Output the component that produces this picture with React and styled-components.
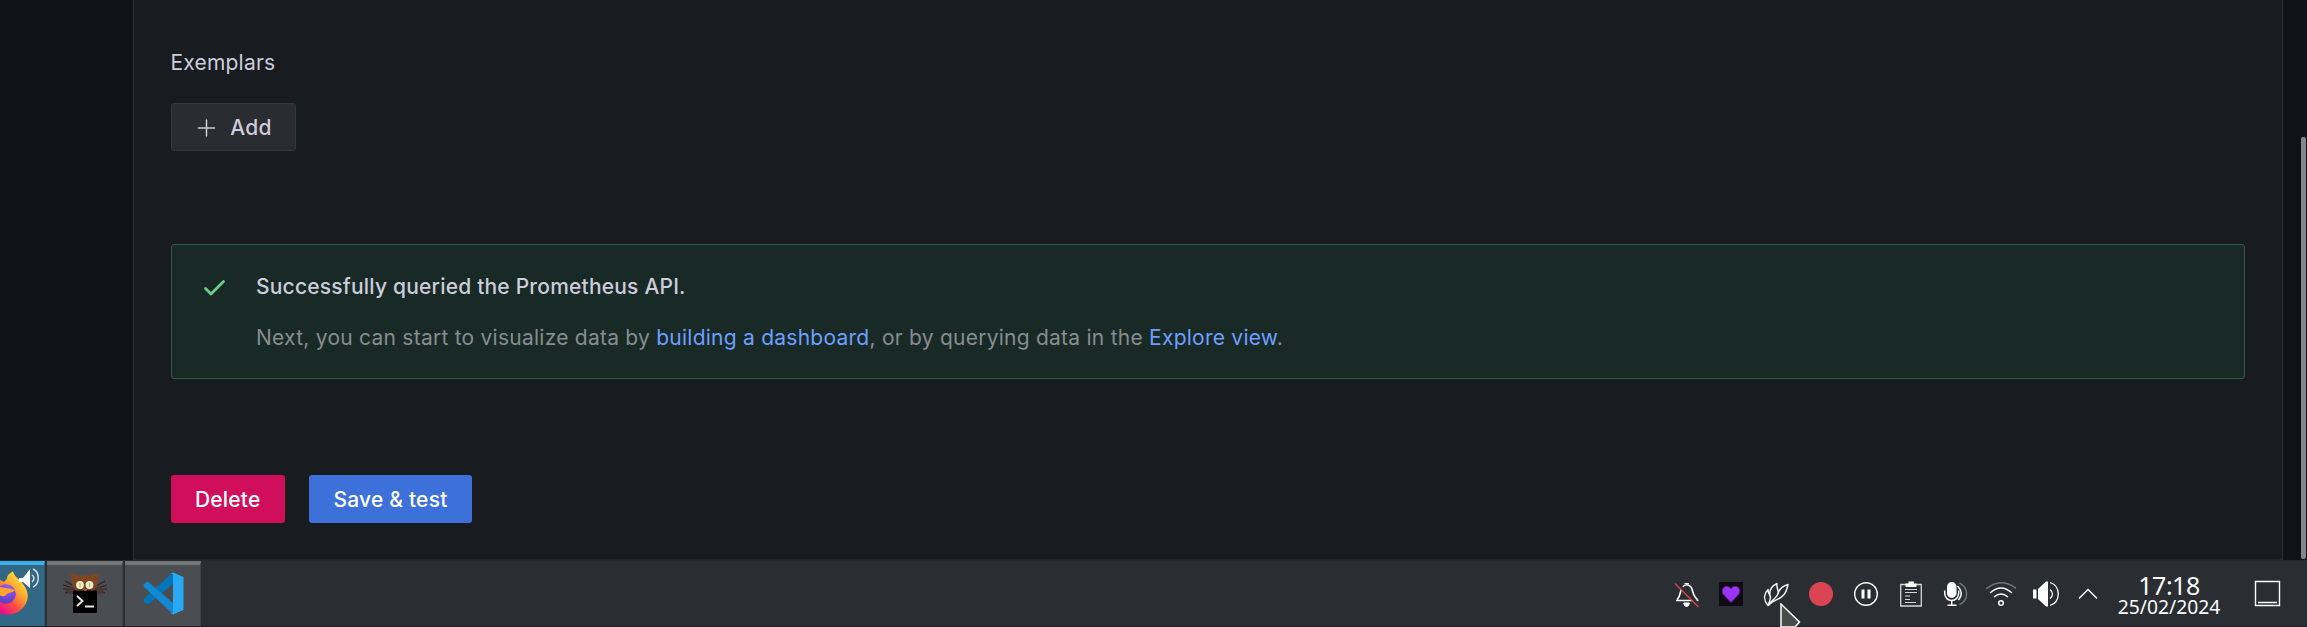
import React from 'react';
import styled, { createGlobalStyle } from 'styled-components';

const Global = createGlobalStyle`
  *, *::before, *::after { box-sizing: border-box; }
  body { margin: 0; background: #111217; overflow: hidden; }
  p, h3 { margin: 0; }
`;

const Screen = styled.div`
  width: 2307px;
  height: 627px;
  display: flex;
  flex-direction: column;
  background: #111217;
  font-family: Inter, 'Liberation Sans', sans-serif;
  font-size: 21px;
  letter-spacing: 0.2px;
  color: #ccccdc;
`;

const Page = styled.div`
  display: flex;
  height: 560px;
  padding-left: 133px;
`;

const Panel = styled.main`
  width: 2150px;
  display: flex;
  flex-direction: column;
  align-items: flex-start;
  padding: 47px 37px 0 36.5px;
  background: #181b1f;
  border-left: 1px solid #303135;
  border-right: 1px solid #303135;
  border-bottom: 1px solid #25282b;
`;

const Gutter = styled.div`
  flex: 1;
  display: flex;
  justify-content: flex-end;
  padding: 137px 1px 1px 0;
`;

const Scrollbar = styled.div`
  width: 5px;
  border-radius: 2px;
  background: #86868a;
`;

const Label = styled.h3`
  font-size: 21px;
  line-height: 32px;
  font-weight: 400;
`;

const variants = {
  secondary: 'background: #2b2c31; color: #ccccdc; border: 1px solid #36373c;',
  danger: 'background: #d10e5c; color: #fff;',
  primary: 'background: #3d71d9; color: #fff;',
};

const Button = styled.button`
  height: 48px;
  width: ${(p) => p.$width}px;
  display: inline-flex;
  align-items: center;
  justify-content: center;
  gap: 12px;
  padding: 2px 0 0;
  border: 0;
  border-radius: 3px;
  font: 500 21px/32px Inter, 'Liberation Sans', sans-serif;
  letter-spacing: 0.2px;
  ${(p) => variants[p.$variant]}
`;

const AddButton = styled(Button)`
  margin-top: 24px;
`;

const Alert = styled.section`
  width: 2074.5px;
  height: 135px;
  margin-top: 93px;
  display: flex;
  gap: 30.5px;
  padding: 26px 30px 21px;
  background: #192a26;
  border: 1px solid #2a5942;
  border-radius: 3px;
`;

const AlertBody = styled.div`
  display: flex;
  flex-direction: column;
  gap: 19px;
`;

const AlertTitle = styled.p`
  font-weight: 500;
  line-height: 32px;
`;

const AlertText = styled.p`
  line-height: 32px;
  letter-spacing: 0.245px;
  color: #868d90;
`;

const Link = styled.a`
  color: #6e9fff;
`;

const Actions = styled.div`
  display: flex;
  gap: 24px;
  margin-top: 96px;
`;

const Taskbar = styled.footer`
  height: 67px;
  display: flex;
  justify-content: space-between;
  background: #2a2e32;
  border-top: 1px solid #25282c;
  border-bottom: 1px solid #202226;
`;

const Tasks = styled.div`
  display: flex;
  gap: 2px;
`;

const Task = styled.div`
  width: ${(p) => p.$width}px;
  display: flex;
  justify-content: center;
  background: ${(p) => (p.$active ? '#336884' : '#4a4d51')};
  border-top: 4px solid ${(p) => (p.$active ? '#3daee9' : '#75787b')};
  border-right: 1px solid ${(p) => (p.$active ? '#2e5e78' : '#404347')};
`;

const Tray = styled.div`
  display: flex;
  align-items: center;
  padding-right: 26px;
`;

const TrayIcons = styled.div`
  display: flex;
  gap: 15px;
  svg { display: block; width: 30px; height: 30px; }
`;

const Clock = styled.div`
  width: 126px;
  display: flex;
  flex-direction: column;
  align-items: center;
  padding-top: 1px;
  color: #fcfcfc;
  font-family: 'Noto Sans', sans-serif;
  letter-spacing: 0;
`;

const Time = styled.div`
  font-size: 25px;
  line-height: 25px;
  letter-spacing: -0.5px;
`;

const DateText = styled.div`
  font-size: 19.3px;
  line-height: 18px;
`;

const DesktopButton = styled.svg`
  display: block;
  margin-left: 22px;
`;

const Pointer = styled.svg`
  position: absolute;
  left: 1780px;
  top: 603px;
`;

const PlusIcon = () => (
  <svg width="24" height="24" viewBox="0 0 24 24" stroke="#ccccdc" strokeWidth="1.5" strokeLinecap="round">
    <path d="M12.500 4V20M4.500 12H20.500" />
  </svg>
);

const CheckIcon = () => (
  <svg width="24" height="30" viewBox="0 0 24 30" fill="none" stroke="#6ccf8e" strokeWidth="2.8" strokeLinecap="round" strokeLinejoin="round">
    <path d="M3.500 17.500L9 23L21.500 10.500" />
  </svg>
);

const FirefoxIcon = () => (
  <svg width="44" height="62" viewBox="0 0 44 62">
    <defs>
      <linearGradient id="ffBody" x1="0.8" y1="0" x2="0.2" y2="1">
        <stop offset="0" stopColor="#fff04a" />
        <stop offset="0.4" stopColor="#ffab2e" />
        <stop offset="0.7" stopColor="#ff5040" />
        <stop offset="1" stopColor="#e8108a" />
      </linearGradient>
      <radialGradient id="ffGlobe" cx="0.6" cy="0.2" r="0.9">
        <stop offset="0" stopColor="#a457f0" />
        <stop offset="0.6" stopColor="#7145dc" />
        <stop offset="1" stopColor="#4a3fb0" />
      </radialGradient>
    </defs>
    <path d="M0 15L4 17L7 14C7 10 10 8 13 6.500C15 13 20 14 23 19C29 26 29 34 25 40C20 48 10 52 0 48.500Z" fill="url(#ffBody)" />
    <circle cx="6" cy="29" r="9.800" fill="url(#ffGlobe)" />
    <path d="M0 22C4 23 9 23 15 25C13 28 8 27 6 30C4 32 2 31 0 30.500Z" fill="#ffa62e" />
    <path d="M19 13H23L30 4V23L23 17H19Z" fill="#fcfcfc" />
    <g fill="none" stroke="#d9e5ec" strokeWidth="1.400">
      <path d="M32 10Q36 13 32 17M33 4C40 7 40 19 33 22" />
    </g>
  </svg>
);

const KittyIcon = () => (
  <svg width="50" height="56" viewBox="0 0 50 56">
    <g fill="none" stroke="#2b2321" strokeWidth="1.200">
      <path d="M14 21L5 16M13 23L3 20M13 24L3 24M13 26L5 28M36 21L45 16M37 23L47 20M37 24L47 24M37 26L45 28" />
    </g>
    <path d="M10.500 9Q17 8.500 20 11Q25 9 29 11Q32 8.500 39 9L38 18Q37 23 34 26H16Q12 22 12 18Z" fill="#7c4621" />
    <ellipse cx="11" cy="25.500" rx="5" ry="3.500" fill="#4b3836" />
    <ellipse cx="39" cy="25.500" rx="5" ry="3.500" fill="#4b3836" />
    <circle cx="20" cy="20" r="3.900" fill="#efeed0" />
    <circle cx="29.500" cy="20" r="3.900" fill="#efeed0" />
    <path d="M20 18V22M29.500 18V22" stroke="#b9ba3a" strokeWidth="1.200" />
    <rect x="13" y="25.500" width="24" height="22.500" rx="1" fill="#000" />
    <path d="M22.500 24H27.500L25 26.500Z" fill="#a05c48" />
    <path d="M17 31L22.500 36L17 41M25 41.500H34" fill="none" stroke="#e8e8e8" strokeWidth="1.900" />
  </svg>
);

const CodeIcon = () => (
  <svg width="42" height="56" viewBox="0 0 42 56">
    <path d="M31 7.500V19L6 39.500L2 37Q.5 35.500 2 34L29 9Z" fill="#0075b7" />
    <path d="M31 38V49L2 22Q.5 20.500 2 19L5 17Q6 16.500 7 17.500Z" fill="#1389d3" />
    <path d="M31 7.500L41.500 12V45L31 49.500Z" fill="#29a8f3" />
    <path d="M28 9L31 7.500L33 8.500V48.500L31 49.500L28 47.500Q32 49 32 45V12Q32 8 28 9Z" fill="#29a8f3" />
  </svg>
);

const BellIcon = () => (
  <svg viewBox="0 0 30 30" fill="none">
    <path d="M5 21.500H27.500M6 20.500C9.500 18 9 11 11.500 8Q15.500 3.500 20 8C22.500 12 21.500 17 26.500 20.500" stroke="#fcfcfc" strokeWidth="1.600" />
    <path d="M13.500 4.500H18M12.800 24H18.300Q18.300 27.500 15.500 27.500T12.800 24Z" fill="#fcfcfc" stroke="#fcfcfc" />
    <path d="M5.500 3.500L29 27" stroke="#2a2e32" strokeWidth="3" />
    <path d="M4 4.500L27.500 28" stroke="#da4453" strokeWidth="1.500" />
  </svg>
);

const HeartIcon = () => (
  <svg viewBox="0 0 30 30">
    <rect x="3" y="3" width="24" height="24" fill="#100a17" />
    <path d="M15 23.500L7 15C4 9 11 4 15 10C19 4 26 9 23 15Z" fill="#9b35f5" stroke="#5c2492" strokeWidth=".7" />
  </svg>
);

const FlameIcon = () => (
  <svg viewBox="0 0 30 30" fill="none" stroke="#f0f0f0" strokeWidth="1.500" strokeLinejoin="round">
    <path d="M7 26.500C1.500 20 3.500 14 7 10.500C7 13.500 8 15 9 16.500C8 11.500 11 7 16 4.500C15 9 18 11 17 14.500C18.500 10 21 7 27 5.500C25.500 11 25.500 14 21.500 17C18.500 20.500 12.500 21 7 26.500Z" />
    <path d="M9 16.500C10.500 19 8.500 22 7 26.500M17 14.500C16.500 18 11 21 7 26.500" />
  </svg>
);

const RecordIcon = () => (
  <svg viewBox="0 0 30 30"><circle cx="15" cy="15" r="12" fill="#da4453" /></svg>
);

const PauseIcon = () => (
  <svg viewBox="0 0 30 30" fill="none" stroke="#fcfcfc">
    <circle cx="15" cy="15" r="11.300" strokeWidth="1.400" />
    <path d="M12 10.500V19.500M18 10.500V19.500" strokeWidth="3" />
  </svg>
);

const ClipboardIcon = () => (
  <svg viewBox="0 0 30 30" fill="none" stroke="#d5d6d7" strokeWidth="1.300">
    <path d="M4.700 5.500H25.300V27H4.700Z" />
    <path d="M9.500 4.500H12.500V2.500H18V4.500H20.500V8H9.500Z" fill="#fcfcfc" stroke="none" />
    <path d="M9 10.500H21M9 13.500H21M9 17H14M9 20.500H14M9 23.500H20" strokeWidth="1.100" />
  </svg>
);

const MicIcon = () => (
  <svg viewBox="0 0 30 30" fill="none" stroke="#fcfcfc" strokeWidth="1.500">
    <rect x="6" y="3" width="9.500" height="16" rx="4.700" fill="#fcfcfc" stroke="none" />
    <path d="M3.700 11.500V14C3.700 24 17.700 24 17.700 14V11.500M10.700 21V26M6.500 26.200H15.500" />
    <path d="M16.500 7Q23.500 14 17.500 21" />
    <path d="M18.500 4C28 9 28 21 18.500 25.500" stroke="#707376" />
  </svg>
);

const WifiIcon = () => (
  <svg viewBox="0 0 30 30" fill="none" stroke="#fcfcfc" strokeWidth="1.500">
    <path d="M0 10Q15-2.500 31 10" stroke="#707376" />
    <path d="M4 14Q15 4 26 14M8 18Q15 12 22 18" />
    <circle cx="15" cy="24" r="2.300" />
  </svg>
);

const SpeakerIcon = () => (
  <svg viewBox="0 0 30 30" fill="none" stroke="#fcfcfc" strokeWidth="1.300">
    <path d="M2 10.500H5.500V19.500H2ZM7 10L15 2.500H17V27.500H15L7 20Z" fill="#fcfcfc" stroke="none" />
    <path d="M19 10.500Q24 15 19 19.500M19 3.500C30 7 30 23 19 26.500" />
  </svg>
);

const ChevronIcon = () => (
  <svg viewBox="0 0 30 30" fill="none" stroke="#fcfcfc" strokeWidth="1.400">
    <path d="M3 19.500L12 10.500L21 19.500" />
  </svg>
);

export default function App() {
  return (
    <Screen>
      <Global />
      <Page>
        <Panel>
          <Label>Exemplars</Label>
          <AddButton $variant="secondary" $width={125}>
            <PlusIcon />
            Add
          </AddButton>
          <Alert>
            <CheckIcon />
            <AlertBody>
              <AlertTitle>Successfully queried the Prometheus API.</AlertTitle>
              <AlertText>
                Next, you can start to visualize data by <Link>building a dashboard</Link>, or by querying data in the{' '}
                <Link>Explore view</Link>.
              </AlertText>
            </AlertBody>
          </Alert>
          <Actions>
            <Button $variant="danger" $width={114.5}>Delete</Button>
            <Button $variant="primary" $width={163}>Save &amp; test</Button>
          </Actions>
        </Panel>
        <Gutter>
          <Scrollbar />
        </Gutter>
      </Page>
      <Taskbar>
        <Tasks>
          <Task $active $width={45}><FirefoxIcon /></Task>
          <Task $width={76}><KittyIcon /></Task>
          <Task $width={76}><CodeIcon /></Task>
        </Tasks>
        <Tray>
          <TrayIcons>
            <BellIcon />
            <HeartIcon />
            <FlameIcon />
            <RecordIcon />
            <PauseIcon />
            <ClipboardIcon />
            <MicIcon />
            <WifiIcon />
            <SpeakerIcon />
            <ChevronIcon />
          </TrayIcons>
          <Clock>
            <Time>17:18</Time>
            <DateText>25/02/2024</DateText>
          </Clock>
          <DesktopButton width="27" height="27" viewBox="0 0 27 27" fill="none" stroke="#fcfcfc" strokeWidth="1.400">
            <path d="M1.500 1.500H25.500V25.500H1.500ZM4 22.500H23" />
          </DesktopButton>
        </Tray>
      </Taskbar>
      <Pointer width="21" height="24" viewBox="0 0 21 24">
        <path d="M1 1L19.500 19L15 24H1Z" fill="#4a4a4a" stroke="#fcfcfc" strokeWidth="1.500" />
      </Pointer>
    </Screen>
  );
}
